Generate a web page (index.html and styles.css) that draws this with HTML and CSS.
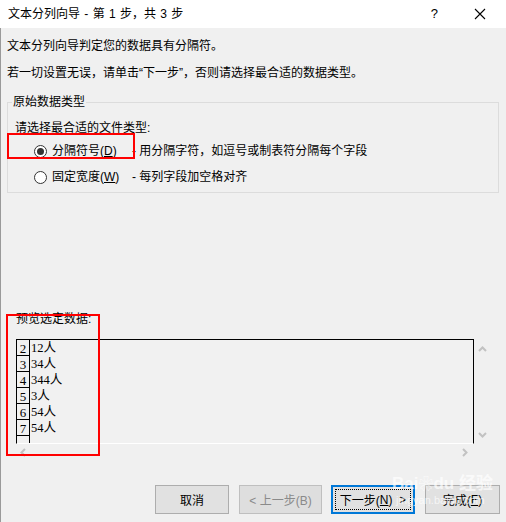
FILE: index.html
```html
<!DOCTYPE html>
<html lang="zh-CN">
<head>
<meta charset="utf-8">
<title>文本分列向导</title>
<link rel="stylesheet" href="styles.css">
</head>
<body>
<div class="window">
  <div class="titlebar">
    <span class="title">文本分列向导 - 第 1 步，共 3 步</span>
    <span class="help">?</span>
    <svg class="close" width="12" height="12" viewBox="0 0 12 12"><path d="M1 1L11 11M11 1L1 11" stroke="#000" stroke-width="1.1" fill="none"/></svg>
  </div>
  <div class="content">
    <p class="line1">文本分列向导判定您的数据具有分隔符。</p>
    <p class="line2">若一切设置无误，请单击“下一步”，否则请选择最合适的数据类型。</p>
    <fieldset class="group">
      <legend>原始数据类型</legend>
      <div class="prompt">请选择最合适的文件类型:</div>
      <div class="radio-row">
        <span class="radio checked"></span>
        <span class="rlabel">分隔符号(<u>D</u>)</span>
        <span class="rdesc">- 用分隔字符，如逗号或制表符分隔每个字段</span>
      </div>
      <div class="radio-row">
        <span class="radio"></span>
        <span class="rlabel">固定宽度(<u>W</u>)</span>
        <span class="rdesc">- 每列字段加空格对齐</span>
      </div>
    </fieldset>
    <div class="preview-label">预览选定数据:</div>
    <div class="preview">
      <div class="pbox">
        <div class="numcol">
          <div class="num">2</div>
          <div class="num">3</div>
          <div class="num">4</div>
          <div class="num">5</div>
          <div class="num">6</div>
          <div class="num">7</div>
        </div>
        <div class="datacol">
          <div class="cell">12人</div>
          <div class="cell">34人</div>
          <div class="cell">344人</div>
          <div class="cell">3人</div>
          <div class="cell">54人</div>
          <div class="cell">54人</div>
        </div>
      </div>
      <div class="vscroll">
        <svg width="9" height="6" viewBox="0 0 9 6"><path d="M1 5L4.5 1.5L8 5" stroke="#c2c2c2" stroke-width="2" fill="none"/></svg>
        <svg width="9" height="6" viewBox="0 0 9 6"><path d="M1 1L4.5 4.5L8 1" stroke="#c2c2c2" stroke-width="2" fill="none"/></svg>
      </div>
      <div class="hscroll">
        <svg width="6" height="9" viewBox="0 0 6 9"><path d="M5 1L1.5 4.5L5 8" stroke="#c2c2c2" stroke-width="2" fill="none"/></svg>
        <svg width="6" height="9" viewBox="0 0 6 9"><path d="M1 1L4.5 4.5L1 8" stroke="#c2c2c2" stroke-width="2" fill="none"/></svg>
      </div>
    </div>
    <div class="buttons">
      <button class="btn w74">取消</button>
      <button class="btn w83 disabled">&lt; 上一步(B)</button>
      <button class="btn w84 default"><span class="focus">下一步(<u>N</u>)&nbsp;&nbsp;&gt;</span></button>
      <button class="btn w75">完成(<u>F</u>)</button>
    </div>
  </div>
  <div class="redbox box1"></div>
  <div class="redbox box2"></div>
  <div class="watermark">
    <div class="wm1">Bai<span class="paw">❀</span>du 经验</div>
    <div class="wm2">jingyan.baidu.com</div>
  </div>
</div>
</body>
</html>
```
FILE: styles.css
```css
html, body {
  margin: 0;
  padding: 0;
}
body {
  font-family: "Liberation Sans", "Noto Sans CJK SC", sans-serif;
  font-size: 12px;
  color: #000;
  background: #f0f0f0;
}
.window {
  position: relative;
  width: 506px;
  height: 522px;
  overflow: hidden;
}
.titlebar {
  height: 28px;
  background: #fff;
  display: flex;
  align-items: center;
  padding-left: 8px;
  box-sizing: border-box;
}
.title {
  flex: 1;
  line-height: 16px;
  word-spacing: 1px;
}
.help {
  font-size: 13px;
  line-height: 16px;
  margin-right: 36px;
}
.close {
  margin-right: 20px;
}
.content {
  height: 494px;
  box-sizing: border-box;
  border-left: 1px solid #9a9a9a;
  padding-left: 6px;
  background: #f0f0f0;
}
.content p {
  margin: 0;
  line-height: 16px;
}
.line1 { padding-top: 10px; }
.line2 { margin-top: 11px !important; }
.group {
  margin: 13px 0 0 0;
  padding: 0 0 2px 0;
  width: 492px;
  box-sizing: border-box;
  border: 1px solid #dcdcdc;
  min-width: 0;
}
.group legend {
  margin-left: 4px;
  padding: 0 1px;
  line-height: 16px;
}
.prompt {
  margin-top: 10px;
  padding-left: 7px;
  line-height: 16px;
}
.radio-row {
  height: 26px;
  display: flex;
  align-items: center;
  padding-left: 26px;
}
.prompt + .radio-row { margin-top: 2px; }
.radio {
  width: 13px;
  height: 13px;
  box-sizing: border-box;
  border: 1px solid #333;
  border-radius: 50%;
  background: #fff;
  position: relative;
  flex: none;
}
.radio.checked::after {
  content: "";
  position: absolute;
  left: 2px;
  top: 2px;
  width: 7px;
  height: 7px;
  border-radius: 50%;
  background: #333;
}
.rlabel {
  width: 80px;
  margin-left: 5px;
  line-height: 16px;
}
.rdesc { line-height: 16px; }
.preview-label {
  margin-top: 118px;
  padding-left: 9px;
  line-height: 16px;
}
.preview {
  margin-top: 12px;
  margin-left: 9px;
  display: grid;
  grid-template-columns: 458px 17px;
  grid-template-rows: 105px 16px;
}
.pbox {
  box-sizing: border-box;
  border-top: 1px solid #000;
  border-left: 1px solid #000;
  border-right: 1px solid #000;
  border-bottom: 1px solid #fff;
  display: flex;
  background: #f1f1f1;
  font-family: "Liberation Serif", "Noto Sans CJK SC", serif;
  font-size: 13px;
}
.numcol {
  width: 12px;
  border-right: 1px solid #000;
  flex: none;
}
.num {
  height: 15px;
  border-bottom: 1px solid #000;
  line-height: 17px;
  text-align: center;
  overflow: hidden;
}
.datacol {
  padding-left: 1px;
}
.cell {
  height: 16px;
  line-height: 17px;
  font-size: 12.5px;
}
.vscroll {
  display: flex;
  flex-direction: column;
  justify-content: space-between;
  align-items: center;
  padding: 7px 0 6px 0;
}
.hscroll {
  grid-column: 1 / 2;
  display: flex;
  justify-content: space-between;
  align-items: center;
  padding: 0 6px 0 4px;
}
.buttons {
  margin-top: 25px;
  display: flex;
  justify-content: flex-end;
  padding-right: 6px;
  gap: 10px;
}
.btn {
  height: 29px;
  box-sizing: border-box;
  background: #e1e1e1;
  border: 1px solid #adadad;
  font-family: "Liberation Sans", "Noto Sans CJK SC", sans-serif;
  font-size: 12px;
  color: #000;
  padding: 0;
  display: flex;
  align-items: center;
  justify-content: center;
}
.w74 { width: 74px; }
.w83 { width: 83px; margin-right: -1px; }
.w84 { width: 84px; }
.w75 { width: 75px; }
.btn.disabled {
  border-color: #bfbfbf;
  background: #dedede;
  color: #8a8a8a;
}
.btn.default {
  border: 2px solid #0078d7;
}
.focus {
  box-sizing: border-box;
  width: 76px;
  height: 21px;
  border: 1px dotted #000;
  display: flex;
  align-items: center;
  justify-content: center;
}
.redbox {
  position: absolute;
  border: 2px solid #ff0000;
  box-sizing: border-box;
}
.box1 { left: 7px; top: 133px; width: 128px; height: 26px; }
.box2 { left: 6px; top: 314px; width: 94px; height: 142px; }
.watermark {
  position: absolute;
  left: 392px;
  top: 474px;
  color: rgba(255, 255, 255, 0.7);
  font-family: "Liberation Sans", "Noto Sans CJK SC", sans-serif;
}
.wm1 {
  font-size: 17px;
  font-weight: bold;
  line-height: 20px;
}
.paw { font-size: 15px; }
.wm2 {
  font-size: 11px;
  line-height: 12px;
  margin-left: 4px;
}
```
